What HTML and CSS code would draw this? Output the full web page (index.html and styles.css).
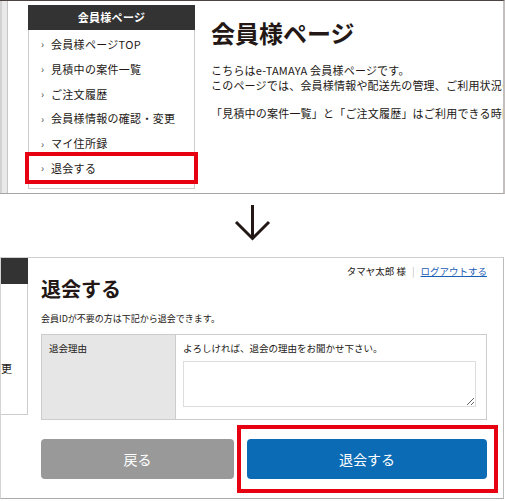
FILE: index.html
```html
<!DOCTYPE html>
<html lang="ja">
<head>
	<meta charset="utf-8">
	<title>退会の手順</title>
	<link rel="stylesheet" href="styles.css">
</head>
<body>
	<!-- before: member page with sidebar -->
	<div class="shot shot-top">
		<div class="side-strip"></div>
		<div class="side-nav">
			<h2 class="side-nav__title">会員様ページ</h2>
			<ul class="side-nav__list">
				<li>会員様ページTOP</li>
				<li>見積中の案件一覧</li>
				<li>ご注文履歴</li>
				<li>会員様情報の確認・変更</li>
				<li>マイ住所録</li>
				<li class="is-marked">退会する</li>
			</ul>
		</div>
		<div class="mypage">
			<h1 class="mypage__title">会員様ページ</h1>
			<p class="mypage__text">こちらはe-TAMAYA 会員様ページです。<br>このページでは、会員様情報や配送先の管理、ご利用状況の確認ができます。</p>
			<p class="mypage__text">「見積中の案件一覧」と「ご注文履歴」はご利用できる時間が限られています。</p>
		</div>
	</div>

	<div class="step-arrow">
		<svg width="37" height="36" viewBox="0 0 37 36">
			<path d="M18.5 0 V33" fill="none" stroke="#231815" stroke-width="3"/>
			<path d="M2 17 L18.5 33.5 L35 17" fill="none" stroke="#231815" stroke-width="3"/>
		</svg>
	</div>

	<!-- after: leave form -->
	<div class="shot shot-bottom">
		<div class="side-cut">
			<div class="side-cut__title"></div>
			<div class="side-cut__body"><span>会員様情報の確認・変更</span></div>
		</div>
		<div class="leave">
			<div class="leave__user">タマヤ太郎 様<span class="leave__sep">|</span><a href="#">ログアウトする</a></div>
			<h1 class="leave__title">退会する</h1>
			<p class="leave__lead">会員IDが不要の方は下記から退会できます。</p>
			<table class="leave__form">
				<tr>
					<th>退会理由</th>
					<td>
						<p>よろしければ、退会の理由をお聞かせ下さい。</p>
						<textarea></textarea>
					</td>
				</tr>
			</table>
			<div class="leave__buttons">
				<button class="btn btn--back">戻る</button>
				<div class="marker">
					<button class="btn btn--leave">退会する</button>
				</div>
			</div>
		</div>
	</div>
</body>
</html>
```

FILE: styles.css
```css
html {
  box-sizing: border-box;
}

*, *::before, *::after {
  box-sizing: inherit;
  margin: 0;
  padding: 0;
}

body {
  width: 505px;
  height: 501px;
  overflow: hidden;
  font-family: "Noto Sans CJK JP", "Noto Sans", sans-serif;
  color: #231815;
  background: #fff;
}

.shot {
  display: flex;
  overflow: hidden;
}

/* top screenshot */
.shot-top {
  height: 194px;
  border-top: 1px solid #4a4542;
  border-bottom: 1px solid #a8a4a2;
  border-right: 2px solid #c2bfbe;
}

.side-strip {
  flex-shrink: 0;
  width: 8px;
  background: #e9e9e9;
  border-left: 2px solid #d2d2d2;
  border-right: 1px solid #c6c6c6;
}

.side-nav {
  flex-shrink: 0;
  align-self: flex-start;
  width: 167px;
  margin-left: 20px;
  margin-top: 4px;
}

.side-nav__title {
  height: 25px;
  line-height: 25px;
  background: #333;
  color: #fff;
  font-size: 11px;
  font-weight: bold;
  letter-spacing: 0.3px;
  text-align: center;
}

.side-nav__list {
  list-style: none;
  border: 1px solid #ccc;
  border-top: none;
  padding: 1.6px 0 7.6px;
}

.side-nav__list li {
  display: flex;
  align-items: center;
  height: 24.8px;
  padding-left: 12px;
  font-size: 11px;
  letter-spacing: 0.3px;
  white-space: nowrap;
}

.side-nav__list li::before {
  content: '›';
  width: 10px;
  font-size: 10px;
  color: #444;
}

.side-nav__list .is-marked {
  outline: 4px solid #e60012;
}

.mypage {
  flex: 1;
  min-width: 0;
  margin-left: 16px;
  padding-top: 20px;
  white-space: nowrap;
  overflow: hidden;
}

.mypage__title {
  font-size: 24px;
  line-height: 24px;
  font-weight: bold;
  margin-bottom: 17.5px;
}

.mypage__text {
  font-size: 11px;
  line-height: 15px;
  letter-spacing: 0.2px;
}

.mypage__text + .mypage__text {
  margin-top: 13px;
}

/* arrow between shots */
.step-arrow {
  height: 63px;
  padding-top: 11px;
  display: flex;
  justify-content: center;
}

/* bottom screenshot */
.shot-bottom {
  width: 504px;
  height: 242px;
  border-top: 1px solid #cfcfcf;
  border-bottom: 1px solid #aaa;
  border-left: 1px solid #d4d4d4;
  border-right: 1px solid #bbb;
}

.side-cut {
  flex-shrink: 0;
  align-self: flex-start;
  width: 27px;
}

.side-cut__title {
  height: 26px;
  background: #333;
}

.side-cut__body {
  height: 131px;
  display: flex;
  justify-content: flex-end;
  overflow: hidden;
  padding: 77px 15px 0 0;
  border-right: 1px solid #ccc;
  border-bottom: 1px solid #ccc;
  font-size: 11px;
  line-height: 15px;
  white-space: nowrap;
}

.side-cut__body span {
  flex-shrink: 0;
}

.leave {
  width: 446px;
  flex-shrink: 0;
  margin-left: 13px;
  padding-top: 6.5px;
}

.leave__user {
  text-align: right;
  font-size: 9.5px;
  line-height: 13px;
  white-space: nowrap;
}

.leave__sep {
  color: #bbb;
  margin: 0 6px;
}

.leave__user a {
  color: #1b5eb5;
  text-decoration: underline;
}

.leave__title {
  margin-top: 1.5px;
  font-size: 20px;
  line-height: 20px;
  font-weight: bold;
}

.leave__lead {
  margin-top: 12.5px;
  font-size: 9px;
  line-height: 13px;
}

.leave__form {
  width: 446px;
  margin-top: 9.5px;
  border-collapse: collapse;
  font-size: 9.5px;
  line-height: 13px;
}

.leave__form th,
.leave__form td {
  border: 1px solid #ccc;
  vertical-align: top;
}

.leave__form th {
  width: 134px;
  padding: 7px;
  background: #e6e6e6;
  text-align: left;
  font-weight: normal;
}

.leave__form td {
  padding: 7px 10px 12px 7px;
}

.leave__form textarea {
  display: block;
  width: 100%;
  height: 46px;
  margin-top: 6px;
  border: 1px solid #ddd;
  resize: vertical;
  font-family: inherit;
}

.leave__buttons {
  display: flex;
  align-items: center;
  gap: 3px;
  margin-top: 5px;
  margin-right: -11px;
}

.marker {
  border: 4px solid #e60012;
  padding: 10px 7px 10px 6px;
}

.btn {
  display: block;
  height: 40px;
  border: none;
  border-radius: 4px;
  color: #fff;
  font-family: inherit;
  font-size: 14px;
}

.btn--back {
  width: 193px;
  background: #999;
}

.btn--leave {
  width: 240px;
  background: #0b6cb5;
}
```
